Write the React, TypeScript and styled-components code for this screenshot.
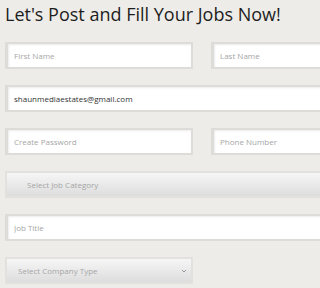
import styled, { createGlobalStyle } from "styled-components";

const GlobalStyle = createGlobalStyle`
  html, body {
    margin: 0;
    padding: 0;
    background: #edece8;
  }
  * {
    box-sizing: border-box;
  }
`;

const Page = styled.div`
  width: 100%;
  overflow: hidden;
  padding: 2px 0 0 5px;
  font-family: "Open Sans", "DejaVu Sans", sans-serif;
`;

const Title = styled.h1`
  margin: 0 0 16px;
  font-size: 18px;
  line-height: 24px;
  font-weight: 400;
  color: #1d1d1d;
  white-space: nowrap;
`;

const Form = styled.form`
  width: 400px;
  display: flex;
  flex-direction: column;
  gap: 16px;
`;

const Row = styled.div`
  display: grid;
  grid-template-columns: 188px 188px;
  gap: 18px;
`;

const Input = styled.input`
  width: 100%;
  height: 27px;
  padding: 0 6px;
  border: 2px solid #dddcd8;
  border-left-width: 3px;
  box-shadow: inset 1px 1px 2px rgba(0, 0, 0, 0.08);
  background: #ffffff;
  font-family: "Open Sans", "DejaVu Sans", sans-serif;
  font-size: 8px;
  color: #333;
  outline: none;
  &::placeholder {
    color: #a6a6a6;
  }
`;

const SelectBox = styled.div<{ $wide?: boolean; $indent: number }>`
  position: relative;
  width: ${(p) => (p.$wide ? "100%" : "188px")};
  height: 27px;
  display: flex;
  align-items: center;
  padding-left: ${(p) => p.$indent}px;
  border: 2px solid #e2e1dd;
  background: linear-gradient(to bottom, #f6f6f6, #dddddd);
  font-size: 8px;
  color: #a6a6a6;
`;

const Chevron = styled.svg`
  position: absolute;
  right: 4px;
  top: 50%;
  margin-top: -3px;
`;

export default function App() {
  return (
    <>
      <GlobalStyle />
      <Page>
        <Title>Let's Post and Fill Your Jobs Now!</Title>
        <Form>
          <Row>
            <Input placeholder="First Name" />
            <Input placeholder="Last Name" />
          </Row>
          <Input defaultValue="shaunmediaestates@gmail.com" />
          <Row>
            <Input placeholder="Create Password" />
            <Input placeholder="Phone Number" />
          </Row>
          <SelectBox $wide $indent={20}>
            Select Job Category
          </SelectBox>
          <Input placeholder="Job Title" />
          <SelectBox $indent={11}>
            Select Company Type
            <Chevron width="6" height="6" viewBox="0 0 6 6">
              <path d="M1 2 L3 4 L5 2" fill="none" stroke="#999" strokeWidth="1" />
            </Chevron>
          </SelectBox>
        </Form>
      </Page>
    </>
  );
}
